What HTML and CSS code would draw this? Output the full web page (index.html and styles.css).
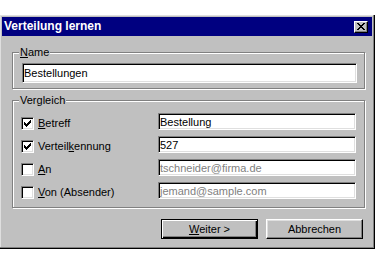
FILE: index.html
```html
<!DOCTYPE html>
<html lang="de">
<head>
    <meta charset="UTF-8">
    <meta name="viewport" content="width=device-width, initial-scale=1.0">
    <title>Verteilung lernen</title>
    <link rel="stylesheet" href="styles.css">
</head>
<body>
    <div class="window">
        <div class="titlebar">
            <span class="title">Verteilung lernen</span>
            <span class="close-btn">
                <svg width="8" height="7" viewBox="0 0 8 7" shape-rendering="crispEdges">
                    <path fill="#000" d="M0 0h2v1h-2z M6 0h2v1h-2z M1 1h2v1h-2z M5 1h2v1h-2z M2 2h4v1h-4z M3 3h2v1h-2z M2 4h4v1h-4z M1 5h2v1h-2z M5 5h2v1h-2z M0 6h2v1h-2z M6 6h2v1h-2z"/>
                </svg>
            </span>
        </div>

        <div class="dialog-body">
            <!-- Gruppe: Name -->
            <fieldset class="group">
                <legend><u>N</u>ame</legend>
                <div class="group-name">
                    <input class="field" type="text" value="Bestellungen">
                </div>
            </fieldset>

            <!-- Gruppe: Vergleich -->
            <fieldset class="group group-spaced">
                <legend>Vergleich</legend>
                <div class="compare-grid">
                    <label class="check-row">
                        <span class="checkbox checked"></span>
                        <span><u>B</u>etreff</span>
                    </label>
                    <input class="field" type="text" value="Bestellung">

                    <label class="check-row">
                        <span class="checkbox checked"></span>
                        <span>Verteil<u>k</u>ennung</span>
                    </label>
                    <input class="field" type="text" value="527">

                    <label class="check-row">
                        <span class="checkbox"></span>
                        <span><u>A</u>n</span>
                    </label>
                    <input class="field" type="text" value="tschneider@firma.de" disabled>

                    <label class="check-row">
                        <span class="checkbox"></span>
                        <span><u>V</u>on (Absender)</span>
                    </label>
                    <input class="field" type="text" value="jemand@sample.com" disabled>
                </div>
            </fieldset>

            <div class="button-row">
                <button class="btn btn-default"><u>W</u>eiter &gt;</button>
                <button class="btn">Abbrechen</button>
            </div>
        </div>
    </div>
</body>
</html>
```

FILE: styles.css
```css
body {
    margin: 0;
    padding: 0;
    background-color: #fff;
    font-family: "Liberation Sans", Arial, sans-serif;
    font-size: 11px;
    color: #000;
}
u {
    text-decoration: underline;
    text-underline-offset: 1px;
}
.window {
    margin-top: 15px;
    width: 375px;
    height: 234px;
    box-sizing: border-box;
    padding: 2px;
    background-color: #c0c0c0;
    border-right: 1px solid #000;
    border-bottom: 1px solid #000;
    box-shadow: inset -1px -1px #808080, inset 1px 1px #dfdfdf;
    display: flex;
    flex-direction: column;
}
.titlebar {
    height: 19px;
    background-color: #000080;
    color: #fff;
    display: flex;
    align-items: center;
    justify-content: space-between;
    padding: 0 4px 0 2px;
}
.title {
    font-size: 12px;
    font-weight: bold;
    line-height: 19px;
}
.close-btn {
    width: 14px;
    height: 12px;
    box-sizing: border-box;
    background-color: #c0c0c0;
    border: 1px solid;
    border-color: #fff #000 #000 #fff;
    box-shadow: inset -1px -1px #808080;
    display: flex;
    align-items: center;
    justify-content: center;
}
.close-btn svg {
    display: block;
    margin: 0 1px 1px 0;
}
.dialog-body {
    padding: 10px 7px 0 10px;
    display: flex;
    flex-direction: column;
}
.group {
    margin: 0;
    padding: 0;
    min-width: 0;
    border: 1px solid #808080;
    box-shadow: 1px 1px 0 #fff, inset 1px 1px 0 #fff;
}
.group legend {
    margin-left: 6px;
    padding: 0 1px;
    line-height: 13px;
    background-color: #c0c0c0;
}
.group-spaced {
    margin-top: 5px;
}
.group-name {
    padding: 4px 7px 5px 9px;
}
.field {
    display: block;
    box-sizing: border-box;
    width: 100%;
    margin: 0;
    padding: 0 1px;
    font-family: "Liberation Sans", Arial, sans-serif;
    font-size: 11px;
    color: #000;
    background-color: #fff;
    border: 1px solid;
    border-color: #808080 #fff #fff #808080;
    box-shadow: inset 1px 1px #000, inset -1px -1px #dfdfdf;
    outline: none;
}
.group-name .field {
    height: 20px;
}
.compare-grid .field {
    height: 17px;
}
.field:disabled {
    color: #808080;
    -webkit-text-fill-color: #808080;
    background-color: #fff;
}
.compare-grid {
    display: grid;
    grid-template-columns: 1fr 198px;
    grid-auto-rows: 17px;
    row-gap: 6px;
    padding: 6px 8px 8px 8px;
}
.check-row {
    display: flex;
    align-items: center;
    align-self: end;
    gap: 4px;
    line-height: 13px;
}
.checkbox {
    width: 13px;
    height: 13px;
    box-sizing: border-box;
    background-color: #fff;
    border: 1px solid;
    border-color: #808080 #fff #fff #808080;
    box-shadow: inset 1px 1px #000, inset -1px -1px #dfdfdf;
    background-repeat: no-repeat;
    background-position: 2px 2px;
}
.checkbox.checked {
    background-image: url("data:image/svg+xml,%3Csvg xmlns='http://www.w3.org/2000/svg' width='7' height='7' shape-rendering='crispEdges'%3E%3Cpath d='M0 2h1v3h-1z M1 3h1v3h-1z M2 4h1v3h-1z M3 3h1v3h-1z M4 2h1v3h-1z M5 1h1v3h-1z M6 0h1v3h-1z'/%3E%3C/svg%3E");
}
.button-row {
    margin-top: 11px;
    display: flex;
    justify-content: flex-end;
    gap: 8px;
    padding-right: 2px;
}
.btn {
    width: 97px;
    height: 20px;
    box-sizing: border-box;
    margin: 0;
    padding: 0;
    font-family: "Liberation Sans", Arial, sans-serif;
    font-size: 11px;
    color: #000;
    background-color: #c0c0c0;
    border: 1px solid;
    border-color: #fff #000 #000 #fff;
    box-shadow: inset -1px -1px #808080, inset 1px 1px #dfdfdf;
}
.btn-default {
    border: 1px solid #000;
    box-shadow: inset 1px 1px #fff, inset -1px -1px #000, inset -2px -2px #808080;
}
```
